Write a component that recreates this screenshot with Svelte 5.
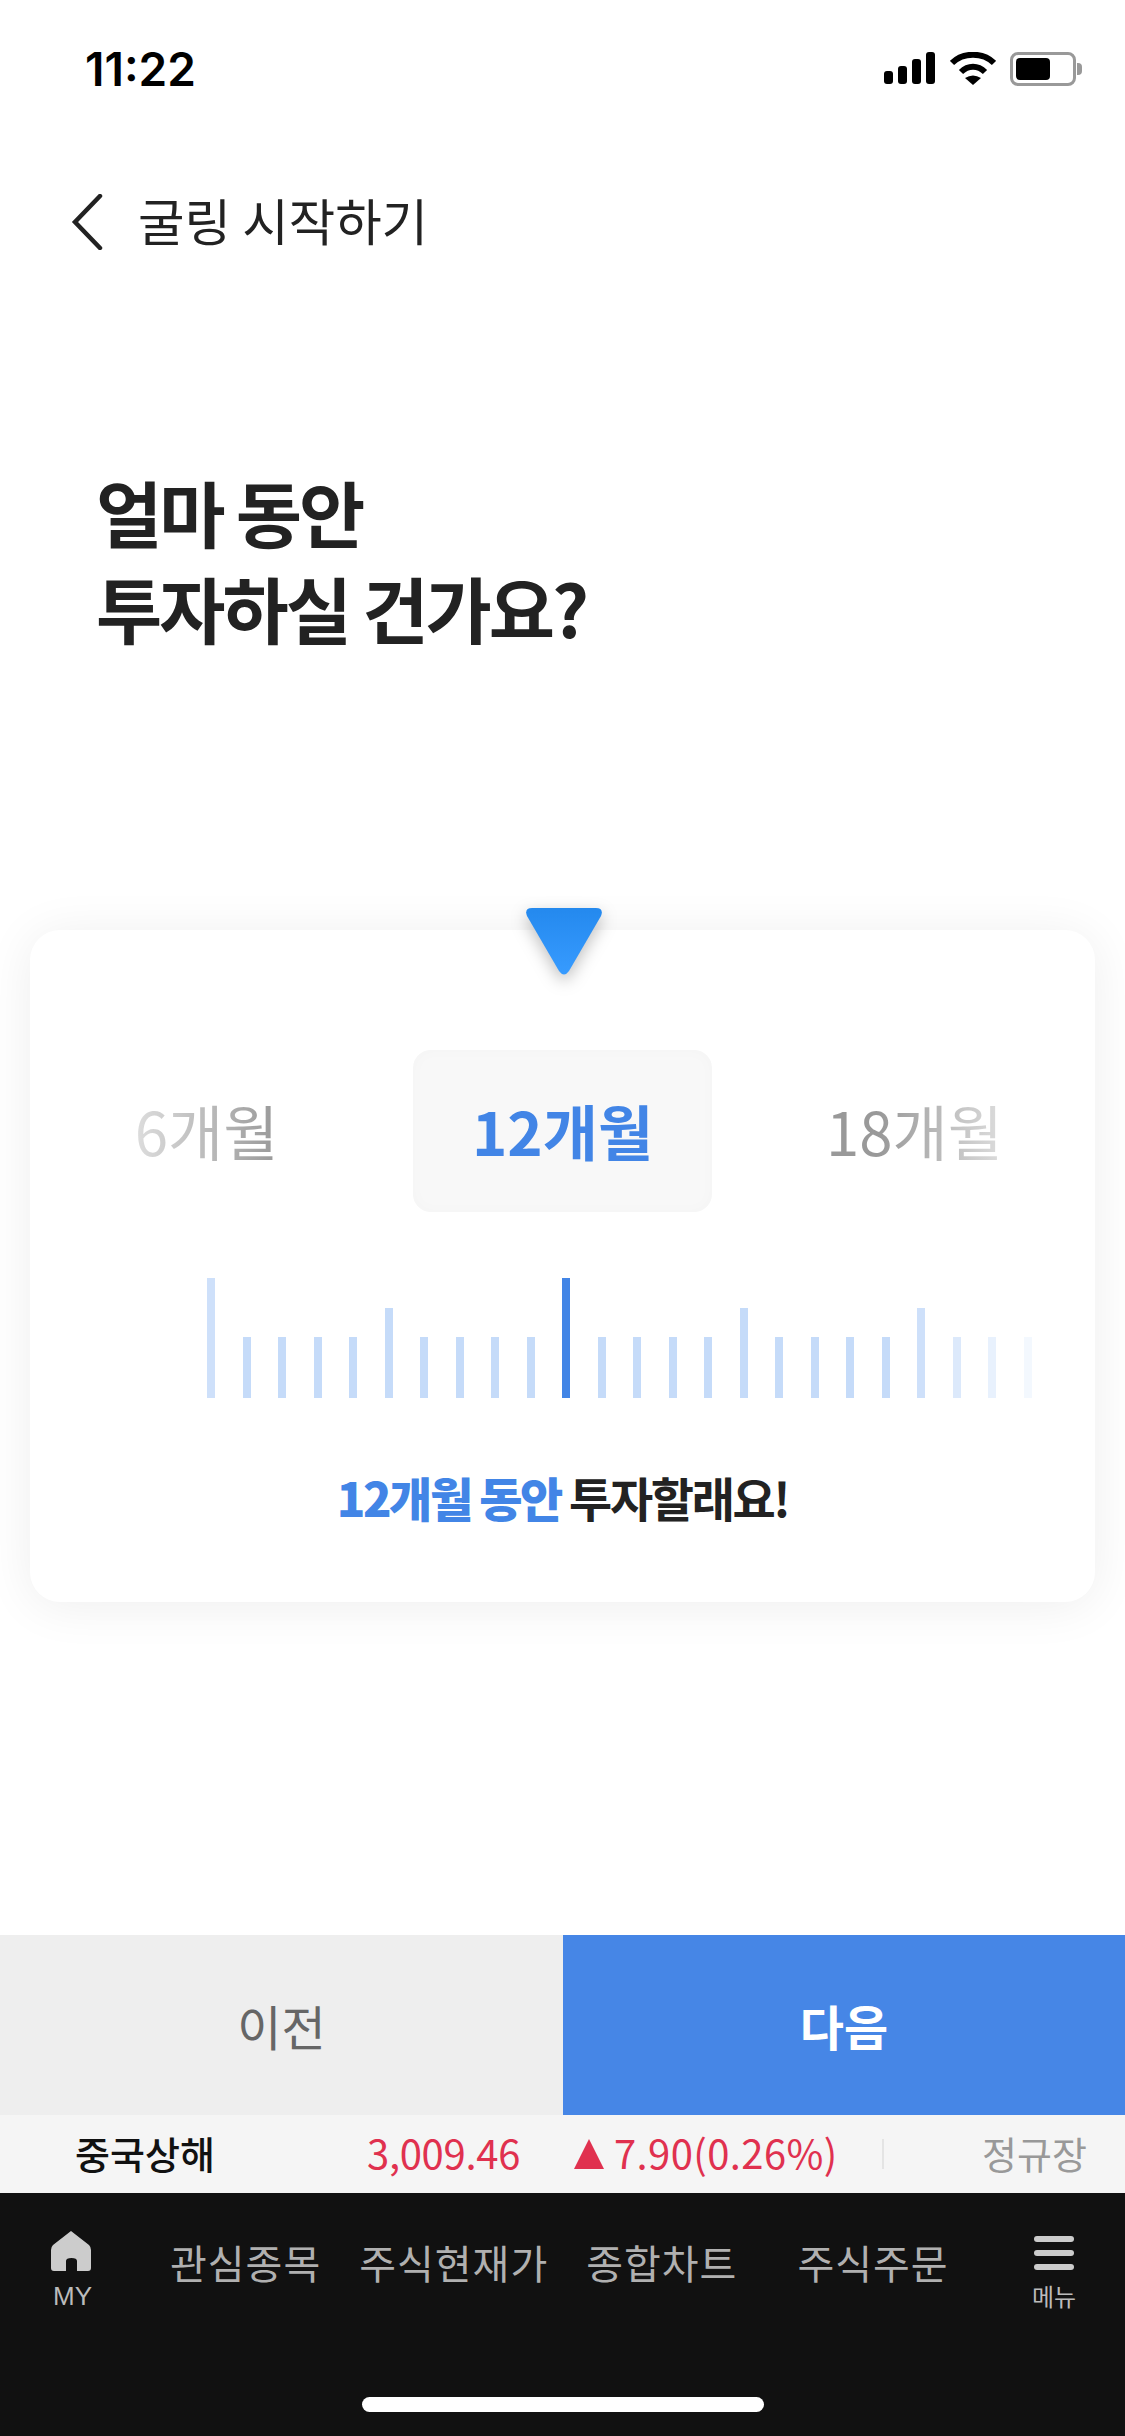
<script>
	const ticks = Array.from({ length: 24 }, (_, i) => i);
	const fade = { 0: 0.85, 20: 0.85, 21: 0.6, 22: 0.4, 23: 0.2 };
	const opacityOf = (i) => fade[i] ?? 1;
	const kindOf = (i) => (i === 10 ? 'now' : i === 0 ? 'tall' : i % 5 === 0 ? 'mid' : 'short');
</script>

<div class="screen">
	<div class="status">
		<span class="time">11:22</span>
		<div class="status-icons">
			<svg width="52" height="34" viewBox="0 0 52 34">
				<g fill="#000">
					<rect x="0" y="19" width="9" height="13" rx="3" />
					<rect x="14" y="14" width="9" height="18" rx="3" />
					<rect x="28" y="7" width="9" height="25" rx="3" />
					<rect x="42" y="0" width="9" height="32" rx="3" />
				</g>
			</svg>
			<svg width="46" height="34" viewBox="0 0 46 34">
				<path d="M2 11 C13 0 33 0 44 11" fill="none" stroke="#000" stroke-width="6" />
				<path d="M11 20 C18 13 28 13 35 20" fill="none" stroke="#000" stroke-width="6" />
				<path d="M15 26 Q23 21 31 26 L23 33 Z" fill="#000" />
			</svg>
			<div class="battery"><div class="level"></div></div>
			<div class="nub"></div>
		</div>
	</div>

	<header class="nav">
		<svg class="back" width="32" height="56" viewBox="0 0 32 56">
			<path d="M29 2 L4 28 L29 54" fill="none" stroke="#222" stroke-width="4.5" stroke-linecap="round" />
		</svg>
		<span>굴링 시작하기</span>
	</header>

	<h1>얼마 동안<br />투자하실 건가요?</h1>

	<section class="card">
		<svg class="pointer" width="84" height="76" viewBox="0 0 84 76">
			<defs>
				<linearGradient id="tri" x1="0" y1="0" x2="0" y2="1">
					<stop offset="0" stop-color="#2489ee" />
					<stop offset="1" stop-color="#379bff" />
				</linearGradient>
			</defs>
			<path d="M10 2 H74 Q82 2 79 10 L47 65 Q42 72 37 65 L5 10 Q2 2 10 2 Z" fill="url(#tri)" />
		</svg>

		<div class="months">
			<span class="month left">6개월</span>
			<span class="month active">12개월</span>
			<span class="month right">18개월</span>
		</div>

		<div class="ruler">
			{#each ticks as i}
				<i class="tick {kindOf(i)}" style:opacity={opacityOf(i)}></i>
			{/each}
		</div>

		<p class="caption"><b>12개월 동안</b> 투자할래요!</p>
	</section>

	<div class="actions">
		<button class="prev">이전</button>
		<button class="next">다음</button>
	</div>

	<div class="ticker">
		<span class="index">중국상해</span>
		<span class="price">3,009.46</span>
		<span class="up"></span>
		<span class="change">7.90(0.26%)</span>
		<span class="sep"></span>
		<span class="session">정규장</span>
	</div>

	<nav class="tabbar">
		<div class="tabs">
			<div class="side my">
				<svg width="40" height="42" viewBox="0 0 40 42">
					<path
						d="M20 1 L38 15 Q40 17 40 20 V38 Q40 41 37 41 H26 V31 Q26 28 20.5 28 Q15 28 15 31 V41 H3 Q0 41 0 38 V20 Q0 17 2 15 Z"
						fill="#ccc"
					/>
				</svg>
				<span>MY</span>
			</div>
			<span class="tab first">관심종목</span>
			<span class="tab">주식현재가</span>
			<span class="tab">종합차트</span>
			<span class="tab gap">주식주문</span>
			<div class="side menu">
				<div class="burger"><i></i><i></i><i></i></div>
				<span>메뉴</span>
			</div>
		</div>
		<div class="home-bar"></div>
	</nav>
</div>

<style>
	:global(body) {
		margin: 0;
		background: #fff;
	}

	.screen {
		width: 1125px;
		height: 2436px;
		display: flex;
		flex-direction: column;
		overflow: hidden;
		font-family: 'Noto Sans CJK KR', 'Noto Sans', sans-serif;
		color: #222;
	}

	.status {
		height: 179px;
		flex: none;
		display: flex;
		justify-content: space-between;
		align-items: flex-start;
		padding: 44px 43px 0 85px;
		box-sizing: border-box;
	}

	.time {
		font-family: Inter, sans-serif;
		font-weight: 600;
		font-size: 46px;
		line-height: 50px;
		color: #000;
	}

	.status-icons {
		display: flex;
		align-items: center;
		gap: 14px;
		margin-top: 7px;
		height: 36px;
	}

	.battery {
		width: 66px;
		height: 34px;
		box-sizing: border-box;
		border: 3px solid #999;
		border-radius: 8px;
		padding: 3px;
	}

	.level {
		width: 34px;
		height: 100%;
		background: #000;
		border-radius: 4px;
	}

	.nub {
		width: 5px;
		height: 12px;
		background: #999;
		border-radius: 0 4px 4px 0;
		margin-left: -13px;
	}

	.nav {
		display: flex;
		align-items: center;
		gap: 35px;
		padding-left: 71px;
		height: 80px;
		flex: none;
	}

	.back {
		margin-top: 6px;
	}

	.nav span {
		font-size: 50.5px;
		line-height: 80px;
	}

	h1 {
		margin: 204px 0 0 96px;
		font-size: 72px;
		line-height: 96px;
		font-weight: 700;
		letter-spacing: -3px;
		color: #222;
		height: 192px;
		flex: none;
	}

	.card {
		position: relative;
		margin: 275px 30px 0;
		height: 672px;
		flex: none;
		background: #fff;
		border-radius: 30px;
		box-shadow: 0 4px 50px rgba(0, 0, 0, 0.07);
		display: flex;
		flex-direction: column;
		align-items: center;
	}

	.pointer {
		position: absolute;
		left: 492px;
		top: -24px;
		filter: drop-shadow(0 6px 8px rgba(0, 0, 0, 0.25));
	}

	.months {
		margin-top: 120px;
		width: 100%;
		height: 162px;
		display: grid;
		grid-template-columns: 383px 299px 1fr;
		flex: none;
	}

	.month {
		font-size: 60px;
		line-height: 160px;
		text-align: center;
		letter-spacing: 0;
	}

	.left {
		justify-self: center;
		margin-left: -30px;
		background: linear-gradient(90deg, #ddd, #999);
		background-clip: text;
		-webkit-background-clip: text;
		color: transparent;
	}

	.right {
		justify-self: center;
		margin-left: 22px;
		background: linear-gradient(90deg, #999 30%, #ddd);
		background-clip: text;
		-webkit-background-clip: text;
		color: transparent;
	}

	.active {
		background: #f8f8f8;
		border-radius: 18px;
		box-shadow: inset 0 0 16px rgba(0, 0, 0, 0.02);
		color: #4285e6;
		font-weight: 700;
	}

	.ruler {
		align-self: flex-start;
		margin: 66px 0 0 177px;
		height: 120px;
		display: flex;
		align-items: flex-end;
		gap: 27.5px;
	}

	.tick {
		display: block;
		width: 8px;
		background: #c5dbf9;
	}

	.short {
		height: 61px;
	}

	.mid {
		height: 90px;
	}

	.tall {
		height: 120px;
	}

	.now {
		height: 120px;
		background: #4285e6;
	}

	.caption {
		margin: 65px 0 0;
		font-size: 47px;
		line-height: 68px;
		font-weight: 700;
		letter-spacing: -2.4px;
		color: #222;
	}

	.caption b {
		color: #4285e6;
	}

	.actions {
		margin-top: auto;
		height: 180px;
		flex: none;
		display: grid;
		grid-template-columns: 563px 1fr;
	}

	.actions button {
		border: 0;
		padding: 0;
		font-family: inherit;
		font-size: 48px;
	}

	.prev {
		background: #eee;
		color: #666;
	}

	.next {
		background: #4686e6;
		color: #fff;
		font-weight: 700;
	}

	.ticker {
		height: 78px;
		flex: none;
		box-sizing: border-box;
		padding-bottom: 4px;
		background: #f5f5f5;
		display: flex;
		align-items: center;
		font-size: 40px;
	}

	.index {
		margin-left: 75px;
		width: 292px;
		font-size: 38px;
		color: #111;
		font-weight: 500;
	}

	.price {
		width: 207px;
		color: #e0314f;
		letter-spacing: -0.3px;
	}

	.up {
		width: 0;
		height: 0;
		border-left: 15px solid transparent;
		border-right: 15px solid transparent;
		border-bottom: 30px solid #e0314f;
		margin-right: 10px;
		margin-top: 4px;
	}

	.change {
		width: 268px;
		color: #e0314f;
		white-space: nowrap;
		letter-spacing: 0.4px;
	}

	.sep {
		width: 2px;
		height: 30px;
		margin-top: 4px;
		background: #e4e4e4;
		margin-right: 98px;
	}

	.session {
		font-size: 38px;
		color: #999;
	}

	.tabbar {
		height: 243px;
		flex: none;
		background: #111;
		position: relative;
	}

	.tabs {
		display: flex;
		align-items: flex-start;
		height: 130px;
		padding-top: 37px;
		box-sizing: border-box;
	}

	.tab {
		font-size: 40px;
		line-height: 56px;
		margin-top: 4px;
		color: #b0b0b0;
		margin-right: 38px;
		white-space: nowrap;
		letter-spacing: 1px;
	}

	.tab.first {
		margin-left: 78px;
	}

	.tab.gap {
		margin-left: 22px;
		margin-right: 0;
	}

	.side {
		display: flex;
		flex-direction: column;
		align-items: center;
		color: #bbb;
		font-size: 24px;
		line-height: 30px;
		white-space: nowrap;
	}

	.my {
		margin-left: 50px;
		width: 42px;
		font-family: 'Liberation Sans', sans-serif;
		font-size: 26px;
		gap: 9px;
	}

	.my span {
		margin-left: 3px;
	}

	.menu {
		margin-left: auto;
		margin-right: 49px;
		width: 44px;
		padding-top: 6px;
		font-size: 24px;
	}

	.burger {
		display: flex;
		flex-direction: column;
		gap: 8px;
		margin-bottom: 11px;
	}

	.burger i {
		display: block;
		width: 40px;
		height: 6px;
		background: #ccc;
		border-radius: 3px;
	}

	.home-bar {
		position: absolute;
		left: 362px;
		top: 204px;
		width: 402px;
		height: 15px;
		background: #fff;
		border-radius: 8px;
	}
</style>
